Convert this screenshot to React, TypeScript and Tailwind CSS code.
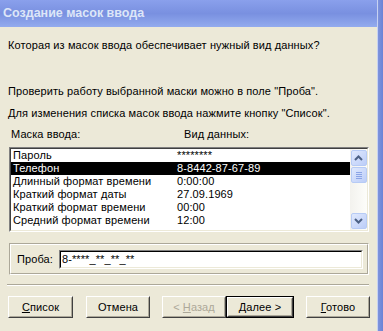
import React from "react";

const font = "font-['Tahoma','Liberation_Sans',sans-serif] text-[11px] leading-[13px] tracking-[0.1px]";

const rows: [string, string][] = [
  ["Пароль", "********"],
  ["Телефон", "8-8442-87-67-89"],
  ["Длинный формат времени", "0:00:00"],
  ["Краткий формат даты", "27.09.1969"],
  ["Краткий формат времени", "00:00"],
  ["Средний формат времени", "12:00"],
];

function Arrow({ up }: { up: boolean }) {
  return (
    <svg width="9" height="6" viewBox="0 0 9 6">
      <path
        d={up ? "M1 5 L4.5 1.5 L8 5" : "M1 1 L4.5 4.5 L8 1"}
        fill="none"
        stroke="#4d6185"
        strokeWidth="2"
      />
    </svg>
  );
}

function ScrollBtn({ children, className = "" }: { children?: React.ReactNode; className?: string }) {
  return (
    <div
      className={`w-[16px] h-[16px] rounded-[2px] border border-[#b7cbf5] bg-gradient-to-br from-[#e0e9fd] to-[#bccdf8] flex items-center justify-center ${className}`}
    >
      {children}
    </div>
  );
}

function Btn({
  children,
  ml,
  w,
  def,
  disabled,
}: {
  children: React.ReactNode;
  ml: string;
  w: string;
  def?: boolean;
  disabled?: boolean;
}) {
  return (
    <div className={`${ml} ${w} h-[22px] ${def ? "border border-black" : ""}`}>
      <div className="h-full w-full border border-t-white border-l-white border-r-[#404040] border-b-[#404040]">
        <div
          className={`h-full w-full border border-t-transparent border-l-transparent border-r-[#aca899] border-b-[#aca899] flex items-center justify-center ${
            disabled ? "text-[#aca899]" : "text-black"
          }`}
        >
          {children}
        </div>
      </div>
    </div>
  );
}

export default function App() {
  return (
    <div className={`w-[383px] h-[331px] flex bg-[#ece9d8] overflow-hidden ${font}`}>
      <div className="w-[377px] flex flex-col">
        <div className="h-[27px] bg-gradient-to-b from-[#8aa0ec] via-[#7990e0] to-[#93abee] flex items-center pl-[3px] pb-[1px]">
          <span className="font-['Trebuchet_MS','Liberation_Sans',sans-serif] font-bold text-[12.5px] tracking-[0px] text-[#dde6f8]">
            Создание масок ввода
          </span>
        </div>

        <div className="pl-[8px] mt-[12px]">Которая из масок ввода обеспечивает нужный вид данных?</div>
        <div className="pl-[8px] mt-[33px]">Проверить работу выбранной маски можно в поле "Проба".</div>
        <div className="pl-[8px] mt-[9px]">Для изменения списка масок ввода нажмите кнопку "Список".</div>
        <div className="flex mt-[8px]">
          <div className="pl-[11px] w-[184px]">Маска ввода:</div>
          <div>Вид данных:</div>
        </div>

        <div className="ml-[9px] mt-[6px] w-[360px] h-[85px] border border-t-[#808080] border-l-[#808080] border-r-white border-b-white">
          <div className="h-full w-full border border-t-[#404040] border-l-[#404040] border-r-[#ece9d8] border-b-[#ece9d8] bg-white flex">
            <div className="flex-1 overflow-hidden">
              {rows.map(([a, b], i) => (
                <div
                  key={a}
                  className={`flex h-[13px] ${i === 1 ? "bg-black text-white" : "text-black"}`}
                >
                  <div className="w-[166px] pl-[2px] whitespace-nowrap overflow-hidden">{a}</div>
                  <div className="whitespace-nowrap">{b}</div>
                </div>
              ))}
            </div>
            <div className="w-[17px] bg-gradient-to-r from-[#f3f2ee] to-[#fdfdfa] flex flex-col items-center">
              <ScrollBtn className="mt-[1px]">
                <Arrow up />
              </ScrollBtn>
              <ScrollBtn className="mt-[1px] h-[15px]">
                <div className="flex flex-col gap-[1px]">
                  <div className="w-[6px] h-[1px] bg-[#8ba4e6]" />
                  <div className="w-[6px] h-[1px] bg-[#8ba4e6]" />
                  <div className="w-[6px] h-[1px] bg-[#8ba4e6]" />
                  <div className="w-[6px] h-[1px] bg-[#8ba4e6]" />
                </div>
              </ScrollBtn>
              <div className="flex-1" />
              <ScrollBtn className="mb-[1px]">
                <Arrow up={false} />
              </ScrollBtn>
            </div>
          </div>
        </div>

        <div className="ml-[9px] mt-[11px] w-[360px] h-[32px] border border-t-[#aca899] border-l-[#aca899] border-r-white border-b-white">
          <div className="h-full w-full border border-t-white border-l-white border-r-[#aca899] border-b-[#aca899] flex items-center">
            <div className="pl-[6px] w-[48px]">Проба:</div>
            <div className="w-[304px] h-[19px] border border-t-[#808080] border-l-[#808080] border-r-white border-b-white">
              <div className="h-full w-full border border-t-black border-l-black border-r-[#ece9d8] border-b-[#ece9d8] bg-white flex items-center pl-[1px]">
                8-****_**_**_**
              </div>
            </div>
          </div>
        </div>

        <div className="ml-[7px] mt-[9px] w-[362px] h-[2px] border-t border-t-[#aca899] border-b border-b-white" />

        <div className="flex mt-[10px]">
          <Btn ml="ml-[8px]" w="w-[65px]">
            <span>
              <span className="underline">С</span>писок
            </span>
          </Btn>
          <Btn ml="ml-[13px]" w="w-[64px]">
            Отмена
          </Btn>
          <Btn ml="ml-[12px]" w="w-[64px]" disabled>
            <span>
              &lt; <span className="underline">Н</span>азад
            </span>
          </Btn>
          <Btn ml="ml-0" w="w-[68px]" def>
            <span>
              <span className="underline">Д</span>алее &gt;
            </span>
          </Btn>
          <Btn ml="ml-[12px]" w="w-[64px]">
            <span>
              <span className="underline">Г</span>отово
            </span>
          </Btn>
        </div>
      </div>
      <div className="w-[6px] flex">
        <div className="w-[1px] bg-[#c7d2f2]" />
        <div className="flex-1 bg-gradient-to-r from-[#7f94dd] to-[#6a82d6]" />
      </div>
    </div>
  );
}
